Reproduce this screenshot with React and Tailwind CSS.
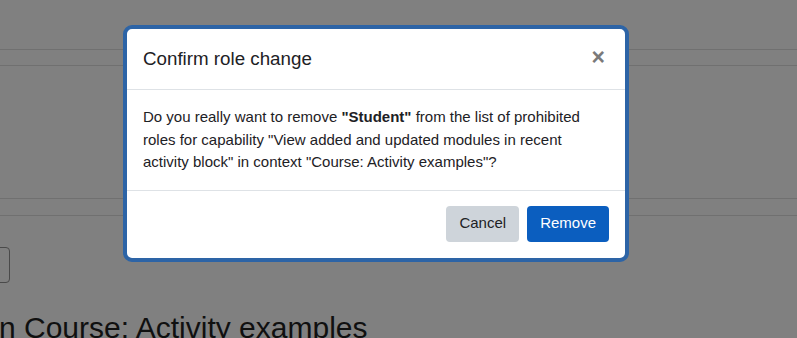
import React from 'react';

const App = () => {
  return (
    <div className="relative w-[797px] h-[338px] overflow-hidden bg-[#808080]" style={{ fontFamily: '"Liberation Sans", Arial, sans-serif' }}>
      {/* Page behind the backdrop */}
      <div className="flex flex-col">
        <div className="h-[49px]"></div>
        <div className="h-[17px] border-y border-[#707070]"></div>
        <div className="h-[132px]"></div>
        <div className="h-[18px] border-y border-[#707070]"></div>
        <div className="h-[31px]"></div>
        <div className="ml-[-30px] w-[40px] h-[36px] border border-[#4a4a4a] rounded-[4px]"></div>
        <h2 className="mt-[30px] ml-[-1px] text-[30px] leading-none text-[#101010] whitespace-nowrap">
          n Course: Activity examples
        </h2>
      </div>

      {/* Modal */}
      <div className="absolute left-[123px] top-[25px] w-[506px] bg-white border-4 border-[#2d64a6] rounded-[9px] text-[#1d2125]">
        <div className="flex items-center justify-between px-4 py-4 border-b border-[#dee2e6]">
          <h5 className="text-[18.75px] leading-[28px]">Confirm role change</h5>
          <button className="text-[23px] font-bold leading-none text-[#7a7a7a] mr-[4px] mt-[-3px]">×</button>
        </div>
        <div className="px-4 py-4 text-[15px] leading-[22.5px] border-b border-[#dee2e6]">
          Do you really want to remove <b>"Student"</b> from the list of prohibited roles for capability "View added and updated modules in recent activity block" in context "Course: Activity examples"?
        </div>
        <div className="flex justify-end gap-2 px-4 pt-[15px] pb-4">
          <button className="h-[36px] px-[13px] rounded-[4px] bg-[#ced4da] text-[15px] text-[#1d2125]">Cancel</button>
          <button className="h-[36px] px-[13px] rounded-[4px] bg-[#0b5ebf] text-[15px] text-white">Remove</button>
        </div>
      </div>
    </div>
  );
};

export default App;
